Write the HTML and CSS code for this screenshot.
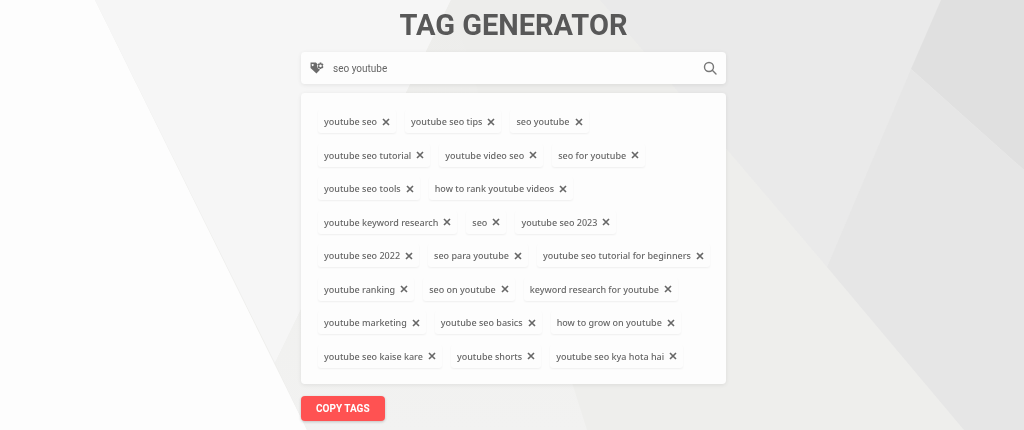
FILE: index.html
```html
<!DOCTYPE html>
<html lang="en">
<head>
    <meta charset="UTF-8">
    <meta name="viewport" content="width=device-width, initial-scale=1.0">
    <title>Tag Generator</title>
    <link rel="stylesheet" href="styles.css">
</head>
<body>
    <!-- Background facets -->
    <svg class="backdrop" viewBox="0 0 1024 430" preserveAspectRatio="none" aria-hidden="true">
        <defs>
            <linearGradient id="center-fade" x1="0" y1="0" x2="0" y2="1">
                <stop offset="0" stop-color="#ededeb"/>
                <stop offset="1" stop-color="#f2f2f1"/>
            </linearGradient>
        </defs>
        <rect width="1024" height="430" fill="#eeeeec"/>
        <path fill="#fdfdfd" d="M0 0H95L307 430H0z"/>
        <path fill="#f6f6f6" d="M95 0H451L275 363z"/>
        <path fill="url(#center-fade)" d="M451 0L587 430H307L275 363z"/>
        <path fill="#ededeb" d="M451 0H600L727 150L563 384z"/>
        <path fill="#eaeaea" d="M600 0H941L827 267z"/>
        <path fill="#e0e0e0" d="M941 0H1024V170L911 69z"/>
        <path fill="#e6e6e6" d="M911 69L1024 170V430H964L827 267z"/>
    </svg>

    <main class="container">
        <h1>TAG GENERATOR</h1>

        <form class="search-bar">
            <svg class="tag-icon" viewBox="0 0 26 22" aria-hidden="true">
                <path fill="#6b6b6b" fill-rule="evenodd" d="M1 1H11L14 4C12 8 14 13 19 14L12 21L1 11zM5 3.5a1.8 1.8 0 1 0 .01 0z"/>
                <path fill="#6b6b6b" fill-rule="evenodd" d="M18 1h3l.6 2 2-.5 1.4 2.5-1.5 1.5v1l1.5 1.5-1.4 2.5-2-.5-.6 2h-3l-.6-2-2 .5L14 9l1.5-1.5v-1L14 5l1.4-2.5 2 .5zM19.5 4.5a2.5 2.5 0 1 0 .01 0z"/>
            </svg>
            <input type="text" id="keyword" value="seo youtube" aria-label="Keyword">
            <button type="submit" class="search-button" aria-label="Search">
                <svg viewBox="0 0 14 14" aria-hidden="true">
                    <circle cx="6" cy="6" r="4.5"/>
                    <path d="M9.3 9.3L13 13"/>
                </svg>
            </button>
        </form>

        <section class="tags-panel" id="tags"></section>

        <button type="button" id="copy-button">COPY TAGS</button>
    </main>

    <script src="script.js"></script>
</body>
</html>
```
FILE: styles.css
```css
* { box-sizing: border-box; margin: 0; padding: 0; }

body {
    font-family: Roboto, "Liberation Sans", sans-serif;
    background-color: #eeeeec;
    color: #5a5a5a;
    min-height: 100vh;
    padding-left: 3px;
}

.backdrop {
    position: fixed;
    inset: 0;
    width: 100%;
    height: 100%;
    z-index: -1;
}

.container {
    max-width: 425px;
    margin: 0 auto;
    padding: 6px 0 9px;
}

h1 {
    font-size: 29px;
    line-height: 38px;
    font-weight: 700;
    text-align: center;
    color: #585858;
}

.search-bar {
    display: flex;
    align-items: center;
    gap: 9px;
    height: 32px;
    margin-top: 8px;
    padding: 0 9px;
    background-color: #fdfdfd;
    border-radius: 4px;
    box-shadow: 0 1px 4px rgba(0, 0, 0, 0.08);
}

.tag-icon { width: 14px; height: 12px; flex-shrink: 0; }

.search-bar input {
    flex: 1;
    min-width: 0;
    border: none;
    outline: none;
    background: none;
    font-family: inherit;
    font-size: 10px;
    color: #666;
}

.search-button {
    width: 14px;
    height: 14px;
    border: none;
    background: none;
    cursor: pointer;
}

.search-button svg {
    display: block;
    fill: none;
    stroke: #777;
    stroke-width: 1.4;
    stroke-linecap: round;
}

.tags-panel {
    display: flex;
    flex-direction: column;
    justify-content: space-between;
    gap: 10px;
    min-height: 291px;
    margin-top: 9px;
    padding: 17px 10px 16px 17px;
    background-color: #fdfdfd;
    border-radius: 4px;
    box-shadow: 0 1px 4px rgba(0, 0, 0, 0.08);
}

.tag-row {
    display: flex;
    flex-wrap: wrap;
    gap: 9px;
    list-style: none;
}

.tag {
    display: flex;
    align-items: center;
    gap: 5px;
    height: 23px;
    padding: 0 6px;
    border-radius: 3px;
    box-shadow: 0 1px 2px rgba(0, 0, 0, 0.06);
    font-family: "Noto Sans", "Open Sans", sans-serif;
    font-size: 9px;
    font-weight: 500;
    color: #666;
    white-space: nowrap;
}

.tag button {
    width: 8px;
    height: 8px;
    border: none;
    background: none;
    cursor: pointer;
}

.tag svg {
    display: block;
    stroke: #666;
    stroke-width: 1.6;
}

#copy-button {
    height: 25px;
    margin-top: 12px;
    padding: 0 15px;
    border: none;
    border-radius: 4px;
    background-color: #ff5252;
    box-shadow: 0 1px 3px rgba(0, 0, 0, 0.2);
    color: #fff;
    font-family: inherit;
    font-size: 10px;
    font-weight: 700;
    cursor: pointer;
}
```
FILE: script.js
```js
const tagsPanel = document.getElementById('tags');
const copyButton = document.getElementById('copy-button');

let tagRows = [
    ['youtube seo', 'youtube seo tips', 'seo youtube'],
    ['youtube seo tutorial', 'youtube video seo', 'seo for youtube'],
    ['youtube seo tools', 'how to rank youtube videos'],
    ['youtube keyword research', 'seo', 'youtube seo 2023'],
    ['youtube seo 2022', 'seo para youtube', 'youtube seo tutorial for beginners'],
    ['youtube ranking', 'seo on youtube', 'keyword research for youtube'],
    ['youtube marketing', 'youtube seo basics', 'how to grow on youtube'],
    ['youtube seo kaise kare', 'youtube shorts', 'youtube seo kya hota hai']
];

function renderTag(tag) {
    return `
        <li class="tag">
            <span>${tag}</span>
            <button type="button" aria-label="Remove ${tag}" data-tag="${tag}">
                <svg viewBox="0 0 8 8"><path d="M1 1l6 6M7 1l-6 6"/></svg>
            </button>
        </li>`;
}

function renderTags() {
    tagsPanel.innerHTML = tagRows
        .map(row => `<ul class="tag-row">${row.map(renderTag).join('')}</ul>`)
        .join('');
}

tagsPanel.addEventListener('click', (e) => {
    const button = e.target.closest('button');
    if (!button) return;
    tagRows = tagRows.map(row => row.filter(tag => tag !== button.dataset.tag));
    renderTags();
});

copyButton.addEventListener('click', () => navigator.clipboard.writeText(tagRows.flat().join(', ')));
document.querySelector('.search-bar').addEventListener('submit', (e) => e.preventDefault());

renderTags();
```
